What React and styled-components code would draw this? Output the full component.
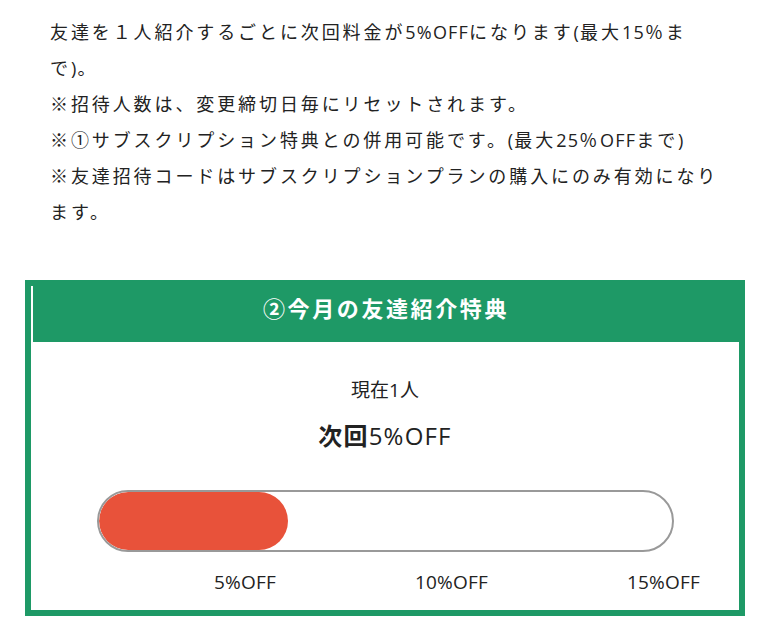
import React from "react";
import styled, { createGlobalStyle } from "styled-components";

const Global = createGlobalStyle`
  html, body { margin: 0; padding: 0; background: #fff; }
  body {
    font-family: "Open Sans", "Noto Sans CJK JP", sans-serif;
    color: #222;
  }
`;

const Page = styled.div`
  width: 770px;
  padding: 14px 0 0;
  box-sizing: border-box;
`;

const Notes = styled.div`
  padding: 0 50px;
  font-size: 18px;
  line-height: 36px;
  letter-spacing: 2.9px;
  color: #222;
`;

const Note = styled.p`
  margin: 0;
`;

const Latin = styled.span`
  letter-spacing: 1.2px;
`;

const Box = styled.section`
  margin: 50px 25px 0;
  border: 6px solid #1e9966;
  background: #fff;
`;

const Header = styled.h3`
  margin: 0;
  height: 56px;
  box-sizing: border-box;
  padding-top: 8px;
  border-left: 2px solid #fff;
  background: #1e9966;
  color: #fff;
  text-align: center;
  font-size: 22px;
  line-height: 28px;
  font-weight: 700;
  letter-spacing: 2.6px;
`;

const Body = styled.div`
  display: flex;
  flex-direction: column;
  align-items: center;
  padding: 34px 0 15px;
`;

const Current = styled.div`
  font-size: 19px;
  line-height: 28px;
  color: #222;
`;

const Next = styled.div`
  margin-top: 15px;
  font-size: 24px;
  line-height: 34px;
  letter-spacing: 1.2px;
  color: #222;
  & b { font-weight: 700; }
`;

const Track = styled.div`
  margin-top: 37px;
  width: 577px;
  height: 62px;
  box-sizing: border-box;
  border: 2px solid #999;
  border-radius: 31px;
  overflow: hidden;
  background: #fff;
`;

const Fill = styled.div`
  height: 100%;
  background: #e8523a;
  border-radius: 29px;
`;

const Labels = styled.div`
  margin-top: 17px;
  align-self: flex-start;
  margin-left: 33px;
  display: grid;
  grid-template-columns: repeat(3, 212px);
`;

const Label = styled.span`
  text-align: right;
  font-size: 19px;
  line-height: 26px;
  letter-spacing: 0.2px;
  color: #222;
`;

export default function App() {
  const pct = 33;
  return (
    <Page>
      <Global />
      <Notes>
        <Note>
          友達を１人紹介するごとに次回料金が<Latin>5%OFF</Latin>になります<Latin>(</Latin>最大<Latin>15</Latin>％まで<Latin>)</Latin>。
        </Note>
        <Note>※招待人数は、変更締切日毎にリセットされます。</Note>
        <Note>
          ※①サブスクリプション特典との併用可能です。<Latin>(</Latin>最大<Latin>25</Latin>％<Latin>OFF</Latin>まで<Latin>)</Latin>
        </Note>
        <Note>※友達招待コードはサブスクリプションプランの購入にのみ有効になります。</Note>
      </Notes>
      <Box>
        <Header>②今月の友達紹介特典</Header>
        <Body>
          <Current>現在1人</Current>
          <Next>
            <b>次回</b>5%OFF
          </Next>
          <Track>
            <Fill style={{ width: `${pct}%` }} />
          </Track>
          <Labels>
            <Label>5%OFF</Label>
            <Label>10%OFF</Label>
            <Label>15%OFF</Label>
          </Labels>
        </Body>
      </Box>
    </Page>
  );
}
